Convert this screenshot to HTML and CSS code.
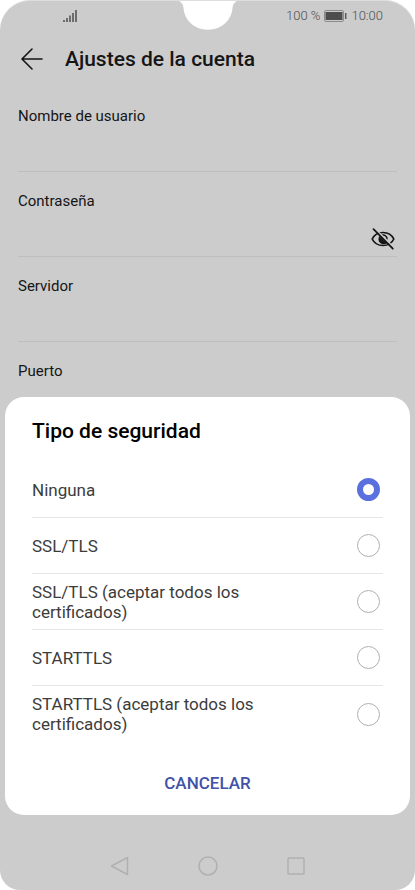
FILE: index.html
```html
<!DOCTYPE html>
<html lang="es">
<head>
<meta charset="utf-8">
<meta name="viewport" content="width=device-width, initial-scale=1">
<title>Ajustes de la cuenta</title>
<link rel="stylesheet" href="styles.css">
</head>
<body>
<div class="screen">
  <div class="status">
    <svg class="signal" width="14" height="14" viewBox="0 0 14 14" aria-hidden="true"><path d="M1 13v-2M4 13V9M7 13V6.500M10 13V4M13 13V1" fill="none" stroke="#5c5c5c" stroke-width="1.700"/></svg>
    <div class="status-right">
      <span>100 %</span>
      <svg width="23" height="12" viewBox="0 0 23 12" aria-hidden="true"><rect x=".5" y=".5" width="19" height="11" rx="1.500" fill="#ccc" stroke="#8b8b8b"/><rect x="1.500" y="2" width="17" height="8" fill="#4d4d4d"/><path d="M21.700 3v6" stroke="#5c5c5c" stroke-width="1.500"/></svg>
      <span>10:00</span>
    </div>
  </div>
  <svg class="notch" width="68" height="30" viewBox="0 0 68 30" aria-hidden="true"><path d="M0 0C6 0 9 3 9.500 8C10.500 20 20 29.700 34 29.700S57.500 20 58.500 8C59 3 62 0 68 0Z" fill="#fff"/></svg>

  <header class="header">
    <button class="icon-button" type="button" aria-label="Atrás"><svg width="22" height="22" viewBox="0 0 22 22"><path d="M21 11H1.500M11 1L1 11L11 21" fill="none" stroke="#151515" stroke-width="1.600" stroke-linejoin="round" stroke-linecap="round"/></svg></button>
    <h1>Ajustes de la cuenta</h1>
  </header>

  <form class="fields">
    <div class="field"><label for="user">Nombre de usuario</label><div class="entry"><input id="user" type="text"></div></div>
    <div class="field"><label for="pass">Contraseña</label><div class="entry"><input id="pass" type="password"><button class="icon-button" type="button" aria-label="Mostrar contraseña"><svg width="24" height="24" viewBox="0 0 24 24"><path d="M1.200 12C3 8.200 7 5.500 12 5.500S21 8.200 22.800 12C21 15.800 17 18.500 12 18.500S3 15.800 1.200 12Z" fill="none" stroke="#151515" stroke-width="1.700"/><path d="M8.300 9L16 16.300C13 18.300 7.500 17 7.500 12.200C7.500 11 7.800 10 8.300 9Z" fill="#151515"/><path d="M11 8C14 7.500 16.300 9.800 16 12.500" fill="none" stroke="#151515" stroke-width="1.500"/><path d="M3.500 1L23 20.500" stroke="#ccc" stroke-width="1.500"/><path d="M2.500 2.200L21.800 21.700" stroke="#151515" stroke-width="1.800" stroke-linecap="round"/></svg></button></div></div>
    <div class="field"><label for="server">Servidor</label><div class="entry"><input id="server" type="text"></div></div>
    <div class="field"><label for="port">Puerto</label><div class="entry"><input id="port" type="text"></div></div>
  </form>

  <nav class="nav" aria-label="Sistema">
    <button class="icon-button" type="button" aria-label="Atrás"><svg width="20" height="20" viewBox="0 0 20 20"><path d="M17.500 1.500V18.500L1.500 10Z"/></svg></button>
    <button class="icon-button" type="button" aria-label="Inicio"><svg width="20" height="20" viewBox="0 0 20 20"><circle cx="10" cy="10" r="9"/></svg></button>
    <button class="icon-button" type="button" aria-label="Recientes"><svg width="20" height="20" viewBox="0 0 20 20"><rect x="2" y="2" width="16" height="16" rx="1"/></svg></button>
  </nav>

  <div class="dialog" role="dialog" aria-labelledby="dialog-title">
    <h2 id="dialog-title">Tipo de seguridad</h2>
    <div class="options">
      <label class="option"><span>Ninguna</span><input type="radio" name="security" checked></label>
      <label class="option"><span>SSL/TLS</span><input type="radio" name="security"></label>
      <label class="option"><span>SSL/TLS (aceptar todos los certificados)</span><input type="radio" name="security"></label>
      <label class="option"><span>STARTTLS</span><input type="radio" name="security"></label>
      <label class="option"><span>STARTTLS (aceptar todos los certificados)</span><input type="radio" name="security"></label>
    </div>
    <button class="cancel" type="button">CANCELAR</button>
  </div>
</div>
</body>
</html>
```
FILE: styles.css
```css
* { box-sizing: border-box; }
body { margin: 0; background: #fff; font-family: Roboto, "Liberation Sans", sans-serif; }
button, input { font: inherit; }
h1, h2 { margin: 0; font-weight: 500; }
svg { display: block; }

.screen {
  position: relative;
  display: flex;
  flex-direction: column;
  min-height: 100vh;
  background: #ccc;
  border-top: 1px solid #dedede;
  border-radius: 30px 30px 20px 20px;
  overflow: hidden;
}
.notch { position: absolute; top: -1px; left: calc(50% - 34px); }

.status {
  display: flex;
  justify-content: space-between;
  align-items: center;
  height: 29px;
  padding: 0 32px 0 63px;
  color: #505050;
  font-size: 13px;
  font-weight: 300;
}
.status-right { display: flex; align-items: center; gap: 4px; }

.icon-button { display: block; flex: none; padding: 0; border: 0; background: none; }

.header { display: flex; align-items: center; gap: 22px; height: 57px; padding: 0 21px; }
.header h1 { color: #151515; font-size: 21px; line-height: 28px; }

.fields { flex: 1; padding: 0 18px; }
.field { height: 85px; padding-top: 19px; border-bottom: 1px solid #bebebe; }
.field label { display: block; color: #151515; font-size: 15px; line-height: 20px; }
.entry { display: flex; align-items: center; height: 44px; padding: 12px 2px 0 0; }
.entry input { flex: 1; min-width: 0; padding: 0; border: 0; outline: 0; background: none; font-size: 16px; }

.nav { display: flex; justify-content: center; gap: 68px; padding-bottom: 14px; }
.nav svg { fill: none; stroke: #b0b0b0; stroke-width: 1.5; stroke-linejoin: round; }

.dialog {
  position: absolute;
  left: 5px;
  right: 5px;
  bottom: 75px;
  padding: 20px 27px 12px;
  border-radius: 19px;
  background: #fff;
}
.dialog h2 { color: #000; font-size: 21px; line-height: 28px; }
.options { padding-top: 17px; }
.option {
  display: flex;
  align-items: center;
  justify-content: space-between;
  gap: 24px;
  height: 56px;
  padding-right: 3px;
  border-bottom: 1px solid #e6e6e6;
  color: #3c3c3c;
  font-size: 17px;
  line-height: 20px;
}
.option:last-child { border-bottom: 0; }
.option span { max-width: 248px; }
.option input {
  appearance: none;
  flex: none;
  width: 23px;
  height: 23px;
  margin: 0;
  border: 1px solid #b0b0b0;
  border-radius: 50%;
}
.option input:checked { border: 6px solid #5b70df; }
.cancel {
  display: block;
  width: 100%;
  height: 40px;
  margin-top: 21px;
  padding: 0;
  border: 0;
  background: none;
  color: #4152a8;
  font-size: 17px;
  font-weight: 500;
}
```
